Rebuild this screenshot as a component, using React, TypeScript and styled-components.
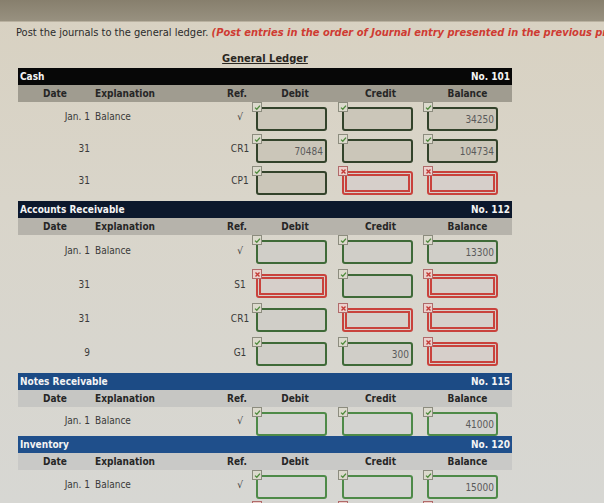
import React from "react";
import styled, { createGlobalStyle } from "styled-components";

const Global = createGlobalStyle`
  html, body { margin: 0; padding: 0; }
  body {
    width: 604px;
    height: 503px;
    overflow: hidden;
    background: linear-gradient(180deg, #d8d1c1 0%, #d9d5ca 40%, #d7d7d3 100%);
    font-family: "DejaVu Sans Condensed", "DejaVu Sans", Verdana, sans-serif;
    color: #2a2a2a;
  }
`;

const Page = styled.div`
  width: 604px;
  height: 503px;
  overflow: hidden;
  display: flex;
  flex-direction: column;
`;

const Bezel = styled.div`
  height: 21px;
  flex: none;
  background: linear-gradient(180deg, #877f6d 0%, #989180 100%);
  border-bottom: 1px solid #b9b1a0;
`;

const Content = styled.div`
  padding: 4px 0 0 16px;
  display: flex;
  flex-direction: column;
`;

const Instruction = styled.div`
  white-space: nowrap;
  font-size: 11px;
  line-height: 13px;
  color: #2b2b2b;
`;

const Hint = styled.span`
  color: #cf3b32;
  font-weight: bold;
  font-style: italic;
`;

const Ledger = styled.div`
  margin: 13px 0 0 2px;
  width: 494px;
  display: flex;
  flex-direction: column;
`;

const Title = styled.div`
  text-align: center;
  font-weight: bold;
  font-size: 11px;
  line-height: 13px;
  text-decoration: underline;
  color: #2a261f;
  margin-bottom: 3px;
`;

const Account = styled.section<{ $gap: number }>`
  display: flex;
  flex-direction: column;
  margin-bottom: ${(p) => p.$gap}px;
`;

const Bar = styled.div<{ $bg: string }>`
  height: 17px;
  background: ${(p) => p.$bg};
  color: #f4f4f4;
  font-weight: bold;
  font-size: 10px;
  display: flex;
  align-items: center;
  justify-content: space-between;
  padding: 0 2px;
`;

const Grid = styled.div`
  display: grid;
  grid-template-columns: 74px 130px 30px 86px 85px 89px;
`;

const HeadRow = styled(Grid)<{ $bg: string }>`
  height: 17px;
  background: ${(p) => p.$bg};
  align-items: center;
  font-weight: bold;
  font-size: 10px;
  color: #262626;
`;

const HeadCell = styled.div<{ $align?: string }>`
  text-align: ${(p) => p.$align || "center"};
  padding-left: ${(p) => (p.$align === "left" ? "3px" : "0")};
`;

const Row = styled(Grid)<{ $h: number }>`
  height: ${(p) => p.$h}px;
  font-size: 10px;
  color: #3a3a3a;
`;

const TextCell = styled.div<{ $align: string; $pad: string }>`
  display: flex;
  align-items: center;
  justify-content: ${(p) => p.$align};
  padding: ${(p) => p.$pad};
  padding-bottom: 3px;
`;

const AmountCell = styled.div`
  position: relative;
  padding: 5px 0 0 4px;
`;

const Box = styled.div<{ $ok: boolean; $fill: string; $edge: string }>`
  box-sizing: border-box;
  width: 71px;
  height: 24px;
  border-radius: 3px;
  background: ${(p) => (p.$ok ? p.$fill : "#d6cfca")};
  border: ${(p) => (p.$ok ? `2px solid ${p.$edge}` : "5px double #c9423c")};
  display: flex;
  align-items: center;
  justify-content: flex-end;
  padding-right: 2px;
  color: #5a5a5a;
  font-size: 10px;
`;

const Badge = styled.div<{ $ok: boolean }>`
  position: absolute;
  left: 0;
  top: 0;
  width: 10px;
  height: 10px;
  box-sizing: border-box;
  border: 1px solid ${(p) => (p.$ok ? "#8c8c7e" : "#b06a6a")};
  background: ${(p) => (p.$ok ? "#dcdacd" : "#ecd0cc")};
  display: flex;
  align-items: center;
  justify-content: center;
`;

type Cell = { ok: boolean; v?: string };
type LRow = { date?: string; expl?: string; ref?: string; cells: Cell[] };
type Acc = {
  name: string;
  no: string;
  bar: string;
  head: string;
  fill: string;
  edge: string;
  rowH: number;
  gap: number;
  rows: LRow[];
};

const good = (v?: string): Cell => ({ ok: true, v });
const bad: Cell = { ok: false };

const accounts: Acc[] = [
  {
    name: "Cash",
    no: "No. 101",
    bar: "#070707",
    head: "#a09c90",
    fill: "#cbc6b9",
    edge: "#33432b",
    rowH: 32,
    gap: 3,
    rows: [
      { date: "Jan. 1", expl: "Balance", ref: "√", cells: [good(), good(), good("34250")] },
      { date: "31", ref: "CR1", cells: [good("70484"), good(), good("104734")] },
      { date: "31", ref: "CP1", cells: [good(), bad, bad] },
    ],
  },
  {
    name: "Accounts Receivable",
    no: "No. 112",
    bar: "#0c182c",
    head: "#b6b3ab",
    fill: "#d0cec8",
    edge: "#3f6a38",
    rowH: 34,
    gap: 2,
    rows: [
      { date: "Jan. 1", expl: "Balance", ref: "√", cells: [good(), good(), good("13300")] },
      { date: "31", ref: "S1", cells: [bad, good(), bad] },
      { date: "31", ref: "CR1", cells: [good(), bad, bad] },
      { date: "9", ref: "G1", cells: [good(), good("300"), bad] },
    ],
  },
  {
    name: "Notes Receivable",
    no: "No. 115",
    bar: "#1c4b85",
    head: "#c6c6c3",
    fill: "#d3d3d0",
    edge: "#4e8a48",
    rowH: 29,
    gap: 0,
    rows: [{ date: "Jan. 1", expl: "Balance", ref: "√", cells: [good(), good(), good("41000")] }],
  },
  {
    name: "Inventory",
    no: "No. 120",
    bar: "#1f4f8b",
    head: "#c9c9c7",
    fill: "#d4d4d2",
    edge: "#4e8a48",
    rowH: 31,
    gap: 0,
    rows: [
      { date: "Jan. 1", expl: "Balance", ref: "√", cells: [good(), good(), good("15000")] },
      { cells: [bad, bad, bad] },
    ],
  },
];

const Check = () => (
  <svg width="7" height="7" viewBox="0 0 7 7">
    <path d="M1 3.6 L2.8 5.3 L6 1.6" fill="none" stroke="#4f8a3c" strokeWidth="1.3" />
  </svg>
);

const Cross = () => (
  <svg width="7" height="7" viewBox="0 0 7 7">
    <path d="M1.5 1.5 L5.5 5.5 M5.5 1.5 L1.5 5.5" stroke="#c43a36" strokeWidth="1.4" />
  </svg>
);

export default function App() {
  return (
    <Page>
      <Global />
      <Bezel />
      <Content>
        <Instruction>
          Post the journals to the general ledger.{" "}
          <Hint>(Post entries in the order of Journal entry presented in the previous problem.)</Hint>
        </Instruction>
        <Ledger>
          <Title>General Ledger</Title>
          {accounts.map((a) => (
            <Account key={a.name} $gap={a.gap}>
              <Bar $bg={a.bar}>
                <span>{a.name}</span>
                <span>{a.no}</span>
              </Bar>
              <HeadRow $bg={a.head}>
                <HeadCell>Date</HeadCell>
                <HeadCell $align="left">Explanation</HeadCell>
                <HeadCell>Ref.</HeadCell>
                <HeadCell>Debit</HeadCell>
                <HeadCell>Credit</HeadCell>
                <HeadCell>Balance</HeadCell>
              </HeadRow>
              {a.rows.map((r, i) => (
                <Row key={i} $h={a.rowH}>
                  <TextCell $align="flex-end" $pad="0 2px 0 0">{r.date}</TextCell>
                  <TextCell $align="flex-start" $pad="0 0 0 3px">{r.expl}</TextCell>
                  <TextCell $align="center" $pad="0 0 0 6px">{r.ref}</TextCell>
                  {r.cells.map((c, j) => (
                    <AmountCell key={j}>
                      <Box $ok={c.ok} $fill={a.fill} $edge={a.edge}>{c.v}</Box>
                      <Badge $ok={c.ok}>{c.ok ? <Check /> : <Cross />}</Badge>
                    </AmountCell>
                  ))}
                </Row>
              ))}
            </Account>
          ))}
        </Ledger>
      </Content>
    </Page>
  );
}
